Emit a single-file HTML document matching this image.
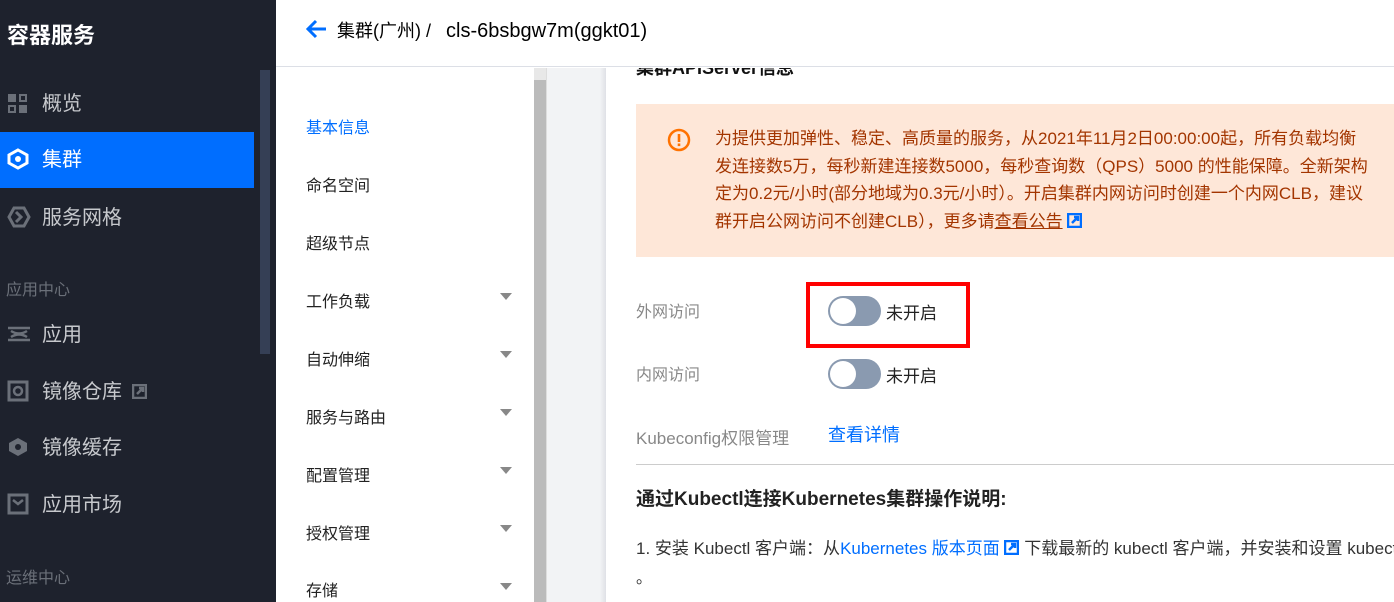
<!DOCTYPE html>
<html><head><meta charset="utf-8"><style>
*{margin:0;padding:0;box-sizing:border-box}
body{width:1394px;height:602px;overflow:hidden;position:relative;background:#fff;font-family:"Liberation Sans","Noto Sans CJK SC",sans-serif}
.abs{position:absolute}
#side{left:0;top:0;width:276px;height:602px;background:#1e222d}
.sitem{position:absolute;left:0;width:254px;height:56px;color:#c7c9cd;font-size:20px;line-height:56px;padding-left:42px}
.sitem svg{position:absolute;left:7px;top:16px}
.sgroup{position:absolute;left:6px;color:#6b7079;font-size:16px}
.nav{position:absolute;left:306px;font-size:16px;color:#222}
.tri{position:absolute;left:500px;width:0;height:0;border-left:6px solid transparent;border-right:6px solid transparent;border-top:7px solid #888}
.lbl{position:absolute;color:#888;font-size:16px}
.sw{position:absolute;width:53px;height:30px;border-radius:15px;background:#8a9ab0}
.sw:after{content:"";position:absolute;left:2px;top:2px;width:26px;height:26px;border-radius:50%;background:#fff}
</style></head><body>
<div id="side" class="abs">
 <div class="abs" style="left:7px;top:18px;color:#fff;font-size:22px;font-weight:bold">容器服务</div>
 <div class="abs" style="left:260px;top:70px;width:10px;height:284px;background:#353f55"></div>
 <div class="sitem" style="top:76px"><svg width="22" height="22"><rect x="1" y="2" width="8" height="8" fill="#6b7079"/><rect x="12" y="2" width="8" height="8" fill="#6b7079"/><rect x="1" y="13" width="8" height="8" fill="#6b7079"/><rect x="12" y="13" width="8" height="8" fill="#6b7079"/><rect x="3" y="15" width="4" height="4" fill="#1e222d"/><rect x="14" y="4" width="4" height="4" fill="#1e222d"/></svg>概览</div>
 <div class="sitem" style="top:132px;background:#006eff;color:#fff"><svg width="22" height="22"><path d="M11 2 L20 7 V15 L11 20 L2 15 V7 Z" fill="none" stroke="#fff" stroke-width="3"/><circle cx="11" cy="11" r="3" fill="#fff"/></svg>集群</div>
 <div class="sitem" style="top:190px"><svg width="24" height="22"><path d="M7 2 L2 11 L7 20 H17 L22 11 L17 2 Z" fill="none" stroke="#6b7079" stroke-width="3"/><path d="M9 6 L14 11 L9 16" fill="none" stroke="#6b7079" stroke-width="3"/></svg>服务网格</div>
 <div class="sgroup" style="top:276px">应用中心</div>
 <div class="sitem" style="top:307px"><svg width="24" height="22"><path d="M1 5 H23 M1 17 H23 M4 8 Q12 13 20 8 M4 14 Q12 9 20 14" fill="none" stroke="#6b7079" stroke-width="2.5"/></svg>应用</div>
 <div class="sitem" style="top:364px"><svg width="22" height="22"><rect x="2" y="2" width="18" height="18" fill="none" stroke="#6b7079" stroke-width="3"/><circle cx="11" cy="11" r="4" fill="none" stroke="#6b7079" stroke-width="2.5"/></svg>镜像仓库 <svg style="position:static;vertical-align:-1px;margin-left:4px" width="15" height="15"><rect x="1" y="1" width="13" height="13" fill="none" stroke="#6b7079" stroke-width="2.5"/><path d="M5 10 L11 4 M7 4 H11 V8" stroke="#6b7079" stroke-width="2.5" fill="none"/></svg></div>
 <div class="sitem" style="top:420px"><svg width="22" height="22"><path d="M11 2 L20 7 V15 L11 20 L2 15 V7 Z" fill="#6b7079"/><circle cx="11" cy="11" r="3" fill="#1e222d"/></svg>镜像缓存</div>
 <div class="sitem" style="top:477px"><svg width="22" height="22"><rect x="2" y="2" width="18" height="18" fill="none" stroke="#6b7079" stroke-width="3"/><path d="M6 7 L11 11 L16 7" fill="none" stroke="#6b7079" stroke-width="2.5"/></svg>应用市场</div>
 <div class="sgroup" style="top:564px">运维中心</div>
</div>
<div class="abs" style="left:276px;top:0;width:1118px;height:67px;border-bottom:1px solid #dcdfe6;background:#fff"></div>
<svg class="abs" style="left:305px;top:18px" width="24" height="22"><path d="M21 11 H4 M11 3 L3 11 L11 19" fill="none" stroke="#006eff" stroke-width="3"/></svg>
<div class="abs" style="left:337px;top:17px;font-size:18px;color:#000">集群(广州) /&nbsp;&nbsp; <span style="font-size:20px">cls-6bsbgw7m(ggkt01)</span></div>
<div class="abs" style="left:534px;top:68px;width:12px;height:534px;background:#bbb"></div>
<div class="abs" style="left:534px;top:68px;width:12px;height:12px;background:#e8e8e8"></div>
<div class="abs" style="left:546px;top:68px;width:60px;height:534px;background:#f2f3f5;border-left:1px solid #ddd"></div>
<div class="abs" style="left:600px;top:68px;width:6px;height:534px;background:linear-gradient(90deg,#f2f3f5,#dfe1e6)"></div>
<div class="nav" style="top:114px;color:#006eff">基本信息</div>
<div class="nav" style="top:172px">命名空间</div>
<div class="nav" style="top:230px">超级节点</div>
<div class="nav" style="top:288px">工作负载</div><div class="tri" style="top:293px"></div>
<div class="nav" style="top:346px">自动伸缩</div><div class="tri" style="top:351px"></div>
<div class="nav" style="top:404px">服务与路由</div><div class="tri" style="top:409px"></div>
<div class="nav" style="top:462px">配置管理</div><div class="tri" style="top:467px"></div>
<div class="nav" style="top:520px">授权管理</div><div class="tri" style="top:525px"></div>
<div class="nav" style="top:577px">存储</div><div class="tri" style="top:583px"></div>
<div class="abs" style="left:636px;top:68px;width:400px;height:8px;overflow:hidden"><div style="margin-top:-14px;font-size:18px;font-weight:bold;color:#111">集群APIServer信息</div></div>
<div class="abs" style="left:636px;top:104px;width:758px;height:153px;background:#fee7d8"></div>
<svg class="abs" style="left:667px;top:128px" width="24" height="24"><circle cx="12" cy="12" r="10" fill="none" stroke="#ff7200" stroke-width="2.5"/><rect x="10.7" y="6" width="2.6" height="8" fill="#ff7200"/><rect x="10.7" y="15.5" width="2.6" height="2.6" fill="#ff7200"/></svg>
<div class="abs" style="left:715px;top:125px;width:700px;font-size:17px;line-height:27.5px;color:#a33500;white-space:nowrap">为提供更加弹性、稳定、高质量的服务，从2021年11月2日00:00:00起，所有负载均衡<br>发连接数5万，每秒新建连接数5000，每秒查询数（QPS）5000 的性能保障。全新架构<br>定为0.2元/小时(部分地域为0.3元/小时）。开启集群内网访问时创建一个内网CLB，建议<br>群开启公网访问不创建CLB），更多请<u>查看公告</u> <svg style="vertical-align:-1px" width="15" height="15"><rect x="1" y="1" width="13" height="13" fill="none" stroke="#006eff" stroke-width="2.5"/><path d="M5 10 L11 4 M7 4 H11 V8" stroke="#006eff" stroke-width="2.5" fill="none"/></svg></div>
<div class="lbl" style="left:636px;top:298px">外网访问</div>
<div class="sw" style="left:828px;top:296px"></div>
<div class="abs" style="left:886px;top:299px;font-size:17px;color:#222">未开启</div>
<div class="abs" style="left:806px;top:282px;width:164px;height:66px;border:4px solid #f00"></div>
<div class="lbl" style="left:636px;top:361px">内网访问</div>
<div class="sw" style="left:828px;top:359px"></div>
<div class="abs" style="left:886px;top:362px;font-size:17px;color:#222">未开启</div>
<div class="lbl" style="left:636px;top:424px;font-size:17px">Kubeconfig权限管理</div>
<div class="abs" style="left:828px;top:421px;font-size:18px;color:#006eff">查看详情</div>
<div class="abs" style="left:636px;top:464px;width:758px;height:1px;background:#ccc"></div>
<div class="abs" style="left:636px;top:484px;font-size:19px;font-weight:bold;color:#222">通过Kubectl连接Kubernetes集群操作说明:</div>
<div class="abs" style="left:636px;top:534px;font-size:17px;color:#333;white-space:nowrap">1. 安装 Kubectl 客户端：从<span style="color:#006eff">Kubernetes 版本页面 </span><svg style="vertical-align:-1px" width="15" height="15"><rect x="1" y="1" width="13" height="13" fill="none" stroke="#006eff" stroke-width="2.5"/><path d="M5 10 L11 4 M7 4 H11 V8" stroke="#006eff" stroke-width="2.5" fill="none"/></svg> 下载最新的 kubectl 客户端，并安装和设置 kubectl</div>
<div class="abs" style="left:636px;top:564px;font-size:16px;color:#333">。</div>
</body></html>
